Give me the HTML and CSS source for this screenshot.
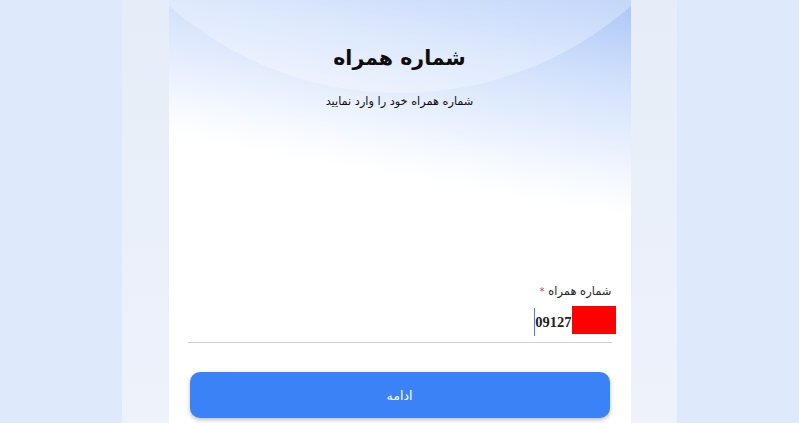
FILE: index.html
```html
<!DOCTYPE html>
<html lang="fa" dir="rtl">
<head>
<meta charset="utf-8">
<title>شماره همراه</title>
<link rel="stylesheet" href="styles.css">
</head>
<body>
<div class="panel">
  <main class="card">
    <div class="arc"></div>
    <h1 class="title">شماره همراه</h1>
    <p class="subtitle">شماره همراه خود را وارد نمایید</p>
    <div class="spacer"></div>
    <label class="label">شماره همراه <span class="req">*</span></label>
    <div class="input">
      <span class="value" dir="ltr">09127</span>
      <span class="redact"></span>
    </div>
    <button class="btn" type="button">ادامه</button>
  </main>
</div>
</body>
</html>
```

FILE: styles.css
```css
html, body {
  margin: 0;
  padding: 0;
  height: 100%;
}
body {
  background: #dfe9fc;
  font-family: "DejaVu Sans", "Noto Sans", sans-serif;
  overflow: hidden;
}
.panel {
  width: 555px;
  height: 423px;
  margin: 0 auto;
  background: linear-gradient(180deg, #e7edf8 0%, #edf2fb 100%);
  display: flex;
  justify-content: center;
}
.card {
  position: relative;
  overflow: hidden;
  width: 462px;
  height: 423px;
  box-sizing: border-box;
  padding: 40px 19px 0;
  background: linear-gradient(190deg, #aac6f7 0%, #d0e0fb 16%, #e6eefd 28%, #f6f9ff 37%, #ffffff 43%);
  display: flex;
  flex-direction: column;
}
.arc {
  position: absolute;
  width: 700px;
  height: 700px;
  border-radius: 50%;
  left: -119px;
  top: -607px;
  background: rgba(255, 255, 255, 0.3);
  pointer-events: none;
}
.title {
  position: relative;
  margin: 0;
  font-size: 20.5px;
  line-height: 36px;
  font-weight: bold;
  text-align: center;
  color: #0d0d0d;
}
.subtitle {
  position: relative;
  margin: 16px 0 0;
  font-size: 11.3px;
  line-height: 20px;
  text-align: center;
  color: #111;
}
.spacer {
  height: 169px;
}
.label {
  font-size: 11.5px;
  line-height: 20px;
  color: #2a2a2a;
  text-align: right;
}
.req {
  color: #e0475b;
  font-size: 10px;
}
.input {
  position: relative;
  margin-top: 4px;
  height: 36px;
  border-bottom: 1px solid #cfcfcf;
  display: flex;
  align-items: flex-start;
  padding-right: 40px;
}
.value {
  margin-top: 2px;
  font-family: "Liberation Serif", serif;
  font-weight: bold;
  font-size: 14.5px;
  line-height: 28px;
  color: #222;
  border-left: 1px solid #3b82f6;
}
.redact {
  position: absolute;
  right: -4px;
  top: 0;
  width: 44px;
  height: 28px;
  background: #ff0000;
}
.btn {
  margin: 29px 2px 0;
  height: 46px;
  border: 0;
  border-radius: 10px;
  background: #3b82f6;
  color: #fff;
  font-family: "DejaVu Sans", sans-serif;
  font-size: 12.5px;
  box-shadow: 0 2px 4px rgba(0, 0, 0, 0.25);
}
```
